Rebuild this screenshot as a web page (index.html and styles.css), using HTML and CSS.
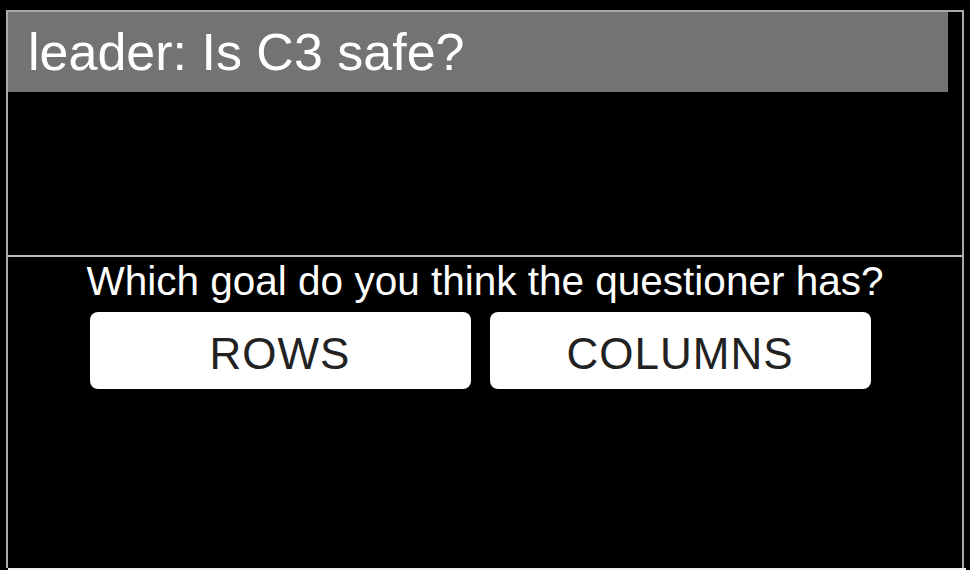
FILE: index.html
```html
<!DOCTYPE html>
<html lang="en">
<head>
    <meta charset="UTF-8">
    <meta name="viewport" content="width=device-width, initial-scale=1.0">
    <title>Questioner Goal</title>
    <link rel="stylesheet" href="styles.css">
</head>
<body>
    <div class="panel">
        <div class="message">leader: Is C3 safe?</div>
        <div class="history"></div>
        <div class="prompt">
            <div class="question">Which goal do you think the questioner has?</div>
            <div class="choices">
                <button class="choice">ROWS</button>
                <button class="choice">COLUMNS</button>
            </div>
        </div>
    </div>
    <div class="footer-line"></div>
</body>
</html>
```

FILE: styles.css
```css
body {
    font-family: 'Liberation Sans', Arial, Helvetica, sans-serif;
    background-color: #000;
    margin: 0;
    padding: 10px 6px 0 6px;
    height: 570px;
    box-sizing: border-box;
    overflow: hidden;
}

.panel {
    width: 958px;
    height: 558px;
    box-sizing: border-box;
    border: 2px solid #aaa;
    border-bottom: none;
}

.message {
    background-color: #737373;
    color: #fff;
    font-size: 52px;
    line-height: 80px;
    height: 80px;
    margin-right: 14px;
    padding-left: 20px;
    white-space: nowrap;
}

.history {
    height: 163px;
    border-bottom: 2px solid #bbb;
}

.prompt {
    text-align: center;
}

.question {
    color: #fff;
    font-size: 40.5px;
    line-height: 48px;
    height: 46px;
}

.choices {
    display: flex;
    justify-content: center;
    gap: 19px;
    margin-top: 9px;
    padding-right: 10px;
}

.choice {
    width: 381px;
    height: 77px;
    padding: 7px 0 0 0;
    background-color: #fff;
    color: #222;
    border: none;
    border-radius: 8px;
    font-family: 'Liberation Sans', Arial, Helvetica, sans-serif;
    font-size: 44px;
    letter-spacing: 1px;
    cursor: pointer;
}

.footer-line {
    height: 2px;
    width: 958px;
    margin-left: 2px;
    background-color: #eee;
}
```
